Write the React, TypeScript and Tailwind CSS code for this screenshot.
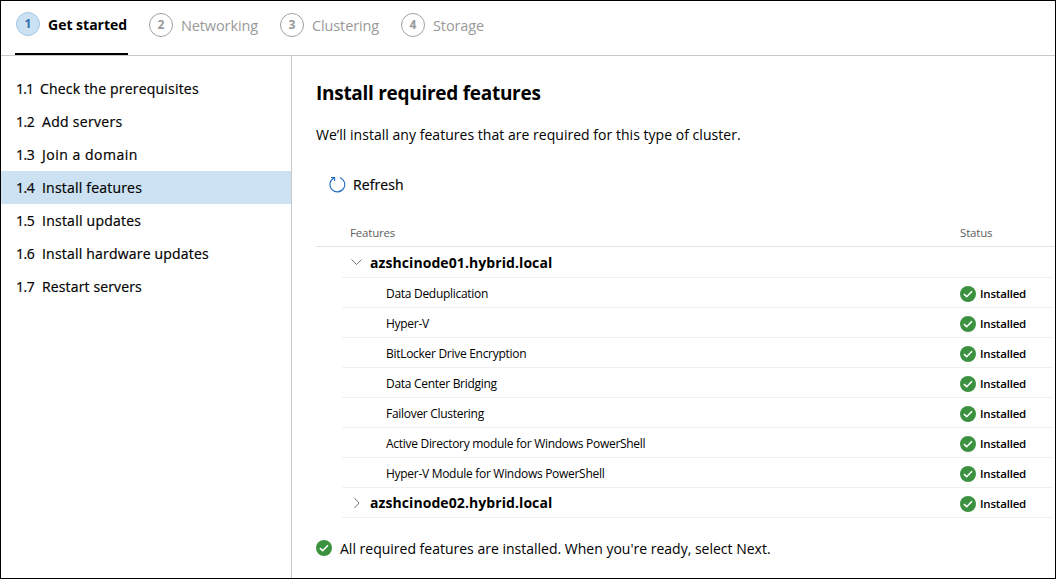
const steps = [
  { n: 2, label: "Networking", width: "w-[131px]" },
  { n: 3, label: "Clustering", width: "w-[121px]" },
  { n: 4, label: "Storage", width: "w-[121px]" },
];

const nav = [
  { n: "1.1", label: "Check the prerequisites", tracking: "tracking-[0.2px]" },
  { n: "1.2", label: "Add servers", tracking: "tracking-[0.3px]" },
  { n: "1.3", label: "Join a domain", tracking: "tracking-[0.52px]" },
  { n: "1.4", label: "Install features", tracking: "tracking-[0.2px]", active: true },
  { n: "1.5", label: "Install updates", tracking: "tracking-[0.24px]" },
  { n: "1.6", label: "Install hardware updates", tracking: "tracking-[0.2px]" },
  { n: "1.7", label: "Restart servers", tracking: "tracking-[0.14px]" },
];

const features = [
  "Data Deduplication",
  "Hyper-V",
  "BitLocker Drive Encryption",
  "Data Center Bridging",
  "Failover Clustering",
  "Active Directory module for Windows PowerShell",
  "Hyper-V Module for Windows PowerShell",
];

function Check() {
  return (
    <svg className="size-4 shrink-0" viewBox="0 0 16 16" fill="none">
      <circle cx="8" cy="8" r="8" fill="#3c9141" />
      <path d="M3.9 8.1 6.7 10.7 12 5.3" stroke="#fff" strokeWidth="1.6" />
    </svg>
  );
}

function Status() {
  return (
    <div className="flex w-[93px] shrink-0 items-center gap-1 pt-0.5">
      <Check />
      <span className="text-[11.5px] font-semibold leading-4 tracking-[-0.2px]">Installed</span>
    </div>
  );
}

function NodeRow({ name, open }: { name: string; open: boolean }) {
  return (
    <div className={open ? "flex h-[31px] items-center border-b border-[#f0f0f0] pl-[8px]" : "flex h-[30px] items-center border-b border-[#f0f0f0] pl-[8px]"}>
      <svg className="size-3 shrink-0" viewBox="0 0 12 12" fill="none" stroke="#666" strokeWidth="0.9">
        <path d={open ? "M1.5 3.5 6.5 8.5 11.5 3.5" : "M4.5 1 9 6 4.5 11"} />
      </svg>
      <span className="ml-[8px] flex-1 text-[14px] font-bold tracking-[0.08px]">{name}</span>
      {!open && <Status />}
    </div>
  );
}

export default function App() {
  return (
    <div className="flex h-[579px] w-[1056px] flex-col overflow-hidden border border-black bg-white font-['Open_Sans',sans-serif] text-black">
      <header className="flex h-[55px] shrink-0 border-b border-[#c8c8c8] pl-[14px]">
        <div className="mr-[21px] flex h-[54px] w-[113px] items-start gap-2 border-b-2 border-black pl-px pt-[11px]">
          <span className="flex size-6 shrink-0 items-center justify-center rounded-full border border-[#a3c8e5] bg-[#cce1f2] text-[12px] font-bold text-[#2f6fb0]">1</span>
          <span className="whitespace-nowrap text-[14px] font-bold leading-[26px]">Get started</span>
        </div>
        {steps.map((s) => (
          <div key={s.n} className={`flex items-start gap-2 pt-3 text-[#999] ${s.width}`}>
            <span className="flex size-6 shrink-0 items-center justify-center rounded-full border border-[#a0a0a0] text-[12px] font-bold">{s.n}</span>
            <span className="text-[14.5px] leading-[26px] tracking-[-0.12px]">{s.label}</span>
          </div>
        ))}
      </header>
      <div className="flex min-h-0 flex-1">
        <nav className="w-[291px] shrink-0 border-r border-[#c8c8c8] pt-4">
          {nav.map((item) => (
            <div
              key={item.n}
              className={`flex h-[33px] items-center pl-[15px] text-[14px] [-webkit-text-stroke:0.2px_black] ${item.active ? "bg-[#cce1f2]" : ""}`}
            >
              <span className={item.n === "1.1" ? "w-6 tracking-[-0.8px]" : "w-[26px] tracking-[-0.5px]"}>{item.n}</span>
              <span className={item.tracking}>{item.label}</span>
            </div>
          ))}
        </nav>
        <main className="flex flex-1 flex-col">
          <h1 className="ml-6 mt-[23px] text-[19px] font-bold leading-7 tracking-[-0.28px]">Install required features</h1>
          <p className="ml-6 mt-[18px] text-[14px] leading-5 tracking-[0.03px]">
            We’ll install any features that are required for this type of cluster.
          </p>
          <div className="ml-9 mt-[29px] flex h-5 items-center gap-[7px]">
            <svg className="ml-px size-[17px]" viewBox="0 0 17 17" fill="none" stroke="#1f6cc0" strokeWidth="1.1">
              <path d="M10.8 1.5A7.4 7.4 0 1 1 5.2 1.8" />
              <path d="M2 1.5H5.6V5" />
            </svg>
            <span className="text-[14px] tracking-[0.1px] [-webkit-text-stroke:0.2px_black]">Refresh</span>
          </div>
          <div className="ml-6 mt-[25px] flex h-[28px] items-center border-b border-[#e2e2e2] pl-[34px] text-[11.5px] tracking-[-0.18px] text-[#606060]">
            <span className="flex-1">Features</span>
            <span className="w-[95px]">Status</span>
          </div>
          <div className="ml-[50px] mr-[2px]">
            <NodeRow name="azshcinode01.hybrid.local" open />
            {features.map((f) => (
              <div key={f} className="flex h-[30px] items-center border-b border-[#f0f0f0] pl-[44px]">
                <span className="flex-1 pt-0.5 text-[12px] tracking-[-0.29px]">{f}</span>
                <Status />
              </div>
            ))}
            <NodeRow name="azshcinode02.hybrid.local" open={false} />
          </div>
          <div className="ml-6 mt-5 flex h-5 items-center gap-2 text-[14px]">
            <Check />
            <span>All required features are installed. When you're ready, select Next.</span>
          </div>
        </main>
      </div>
    </div>
  );
}
